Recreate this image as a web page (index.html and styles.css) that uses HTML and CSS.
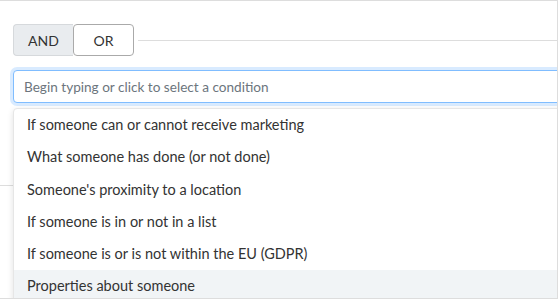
FILE: index.html
```html
<!DOCTYPE html>
<html lang="en">
<head>
    <meta charset="UTF-8">
    <title>Conditions</title>
    <link rel="stylesheet" href="styles.css">
</head>
<body>
    <div class="panel">
        <div class="logic-row">
            <div class="toggle">
                <button class="toggle-btn active">AND</button>
                <button class="toggle-btn">OR</button>
            </div>
            <div class="rule"></div>
        </div>

        <div class="picker">
            <input class="search" type="text" placeholder="Begin typing or click to select a condition">
            <ul class="menu">
                <li>If someone can or cannot receive marketing</li>
                <li>What someone has done (or not done)</li>
                <li>Someone's proximity to a location</li>
                <li>If someone is in or not in a list</li>
                <li>If someone is or is not within the EU (GDPR)</li>
                <li class="hover">Properties about someone</li>
            </ul>
        </div>

        <div class="below"></div>
    </div>
</body>
</html>
```

FILE: styles.css
```css
* {
    margin: 0;
    padding: 0;
    box-sizing: border-box;
}
body {
    font-family: 'Lato', sans-serif;
    background-color: #fff;
    color: #333;
}
.panel {
    width: 558px;
    height: 299px;
    border-top: 1px solid #ddd;
    border-right: 1px solid #ddd;
    border-bottom: 1px solid #ddd;
    padding: 23px 0 0 13px;
    overflow: hidden;
    position: relative;
}
.logic-row {
    display: flex;
    align-items: center;
}
.toggle {
    display: flex;
}
.toggle-btn {
    font-family: inherit;
    font-size: 14px;
    color: #333;
    height: 32px;
    width: 61px;
    background-color: #fff;
    border: 1px solid #aaa;
    border-radius: 4px;
}
.toggle-btn.active {
    width: 60px;
    background-color: #e9ecef;
    border-color: #d6d9dc;
    border-right: none;
    border-radius: 4px 0 0 4px;
}
.rule {
    flex: 1;
    height: 1px;
    background-color: #ddd;
    margin-left: 4px;
}
.picker {
    margin-top: 14px;
    position: relative;
}
.search {
    width: 560px;
    height: 33px;
    font-family: inherit;
    font-size: 13.6px;
    color: #333;
    padding: 0 10px;
    border: 1px solid #80bdff;
    border-radius: 4px;
    box-shadow: 0 0 0 3px rgba(0, 123, 255, 0.15);
    outline: none;
}
.search::placeholder {
    color: #6c757d;
}
.menu {
    position: absolute;
    top: 38px;
    left: 0;
    width: 560px;
    list-style: none;
    background-color: #fff;
    border: 1px solid #e6e6e6;
    border-radius: 4px;
    box-shadow: 0 2px 6px rgba(0, 0, 0, 0.12);
    z-index: 2;
}
.menu li {
    height: 32.25px;
    line-height: 32px;
    padding-left: 13px;
    font-size: 14.5px;
    color: #333;
}
.menu li.hover {
    background-color: #f1f4f6;
}
.below {
    margin: 82px 0 0 -13px;
    border-top: 1px solid #ddd;
}
```
